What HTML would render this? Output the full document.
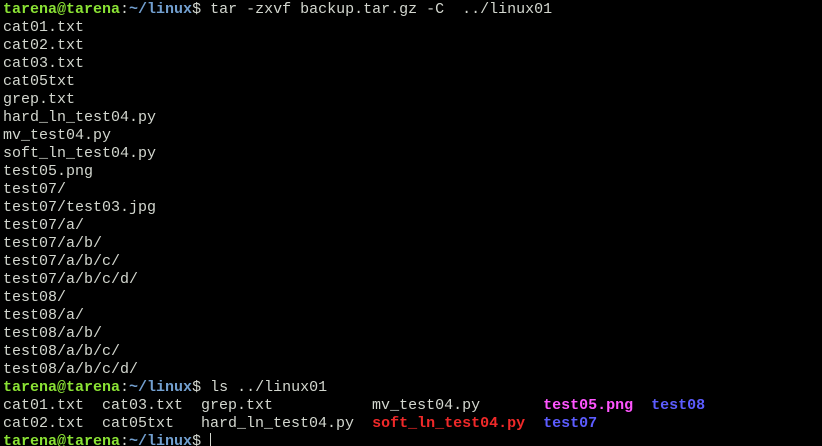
<!DOCTYPE html>
<html><head><meta charset="utf-8"><style>
html,body{margin:0;padding:0;background:#000;width:822px;height:446px;overflow:hidden}
pre{margin:0;padding:1px 0 0 3px;font-family:"Liberation Mono",monospace;font-size:15px;line-height:18px;color:#d3d7cf;white-space:pre}
.g{color:#8ae234;font-weight:bold}
.b{color:#729fcf;font-weight:bold}
.d{color:#5c5cff;font-weight:bold}
.m{color:#ff55ff;font-weight:bold}
.r{color:#ef2929;font-weight:bold}
.cur{display:inline-block;width:1px;height:15px;background:#d3d7cf;vertical-align:-3px}
</style></head><body><pre><span class="g">tarena@tarena</span>:<span class="b">~/linux</span>$ tar -zxvf backup.tar.gz -C  ../linux01
cat01.txt
cat02.txt
cat03.txt
cat05txt
grep.txt
hard_ln_test04.py
mv_test04.py
soft_ln_test04.py
test05.png
test07/
test07/test03.jpg
test07/a/
test07/a/b/
test07/a/b/c/
test07/a/b/c/d/
test08/
test08/a/
test08/a/b/
test08/a/b/c/
test08/a/b/c/d/
<span class="g">tarena@tarena</span>:<span class="b">~/linux</span>$ ls ../linux01
cat01.txt  cat03.txt  grep.txt           mv_test04.py       <span class="m">test05.png</span>  <span class="d">test08</span>
cat02.txt  cat05txt   hard_ln_test04.py  <span class="r">soft_ln_test04.py</span>  <span class="d">test07</span>
<span class="g">tarena@tarena</span>:<span class="b">~/linux</span>$ <span class="cur"></span></pre></body></html>
